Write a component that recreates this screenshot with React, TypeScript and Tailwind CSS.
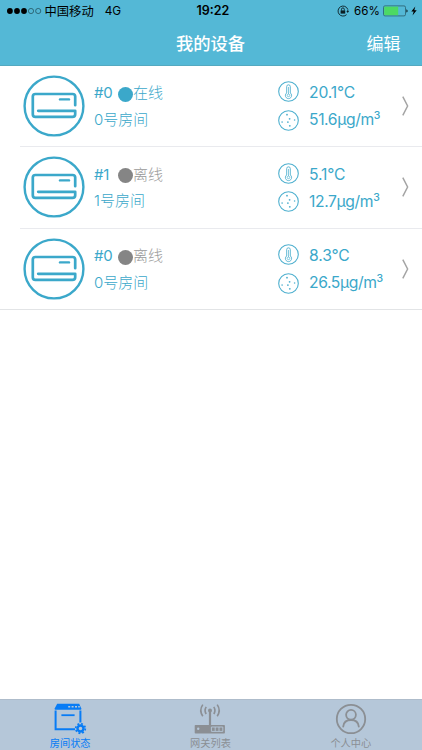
import React, { useState } from "react";

type Device = {
  id: string;
  code: string;
  name: string;
  online: boolean;
  temperature: string;
  dust: string;
};

const devices: Device[] = [
  { id: "a", code: "#0", name: "0号房间", online: true, temperature: "20.1", dust: "51.6" },
  { id: "b", code: "#1", name: "1号房间", online: false, temperature: "5.1", dust: "12.7" },
  { id: "c", code: "#0", name: "0号房间", online: false, temperature: "8.3", dust: "26.5" },
];

function StatusBar() {
  return (
    <div className="relative flex h-[22px] items-center text-[12px] leading-none text-black">
      <svg className="ml-[6px] h-[8px] w-[36px]" viewBox="0 0 36 8">
        <circle cx="3.9" cy="4" r="2.9" />
        <circle cx="11" cy="4" r="2.9" />
        <circle cx="18" cy="4" r="2.9" />
        <circle cx="25" cy="4" r="2.6" fill="none" stroke="#16353e" strokeWidth="0.6" />
        <circle cx="32.2" cy="4" r="2.6" fill="none" stroke="#16353e" strokeWidth="0.6" />
      </svg>
      <span className="ml-[2.5px] mt-[2px] text-[12.3px]">中国移动</span>
      <span className="ml-[11px] mt-[1px] text-[11.8px]">4G</span>
      <span className="absolute left-[196.5px] top-[5px] text-[12.5px] font-semibold">19:22</span>
      <svg className="ml-auto h-[12px] w-[12px]" viewBox="0 0 12 12" fill="none" stroke="#0b1d22" strokeWidth="0.9">
        <path d="M10.7 4.2A5 5 0 1 0 9.6 9.6M10.8 4.5v2" />
        <path d="M9.4 6.1h2.6L10.7 8z" fill="#0b1d22" stroke="none" />
        <path d="M4.5 5.5V4.3a1.4 1.4 0 0 1 2.8 0v1.2" />
        <rect x="3.6" y="5.4" width="4.6" height="3.2" fill="#0b1d22" stroke="none" />
      </svg>
      <span className="ml-[5.5px] mt-[1px] w-[26px] text-[11.6px]">66%</span>
      <svg className="ml-[3px] h-[12px] w-[25px]" viewBox="0 0 25 12">
        <rect x="0.5" y="0.9" width="22" height="10" rx="1.5" fill="none" stroke="#24505c" strokeWidth="0.7" />
        <path d="M1.2 1.6h14v8.6h-14z" fill="#4cd964" />
        <path d="M23.4 4.2c1.6.4 1.6 3 0 3.4z" fill="#0b1d22" />
      </svg>
      <svg className="ml-[3px] mr-[5px] h-[10px] w-[6px]" viewBox="0 0 6 10">
        <path d="M4.3 0.4 0.3 5.6h2.4L1.5 9.6 5.7 4.2H3.3z" />
      </svg>
    </div>
  );
}

function AirConditionerIcon() {
  return (
    <svg className="h-[62px] w-[62px] shrink-0" viewBox="0 0 62 62" fill="none" stroke="#3ba8ca">
      <circle cx="31" cy="31" r="29.4" strokeWidth="2.4" />
      <g strokeWidth="2.7" strokeLinecap="round" strokeLinejoin="round">
        <path d="M52.2 30.2V21.6q0-2.6-2.6-2.6H12.4q-2.6 0-2.6 2.6v17.6q0 2.6 2.6 2.6h37q2.8 0 2.8-2.6v-3.4H15.2" />
        <path d="M37 24.4h9" strokeWidth="2.4" />
      </g>
    </svg>
  );
}

function ThermometerIcon() {
  return (
    <svg className="h-[21px] w-[21px]" viewBox="0 0 21 21" fill="none" stroke="#4fb0cf">
      <circle cx="10.5" cy="10.5" r="9.8" strokeWidth="1.1" />
      <path d="M8.7 12V5.6a1.8 1.8 0 0 1 3.6 0V12a3.1 3.1 0 1 1-3.6 0z" strokeWidth="0.9" />
      <path d="M10.5 6v7" strokeWidth="0.7" />
      <circle cx="10.5" cy="14.4" r="1.3" strokeWidth="0.7" />
    </svg>
  );
}

function DustIcon() {
  return (
    <svg className="h-[21px] w-[21px]" viewBox="0 0 21 21" fill="#4fb0cf">
      <circle cx="10.5" cy="10.5" r="9.8" fill="none" stroke="#4fb0cf" strokeWidth="1.1" />
      <circle cx="9" cy="4.7" r="0.9" />
      <circle cx="11.6" cy="8.8" r="0.9" />
      <circle cx="16.6" cy="10" r="0.8" />
      <circle cx="4.1" cy="12.1" r="0.8" />
      <circle cx="9.9" cy="12.1" r="0.9" />
      <circle cx="11.8" cy="15.8" r="0.9" />
    </svg>
  );
}

function DeviceRow({ device, last }: { device: Device; last: boolean }) {
  return (
    <li className={last ? "border-b border-[#e2e4e6]" : ""}>
      <div
        className={
          last
            ? "ml-[20px] flex h-[80.5px] items-center pl-[2.5px]"
            : "ml-[20px] flex h-[81.5px] items-center border-b border-[#e9eaee] pl-[2.5px]"
        }
      >
        <AirConditionerIcon />
        <div className="ml-[9.5px] mt-[2.5px] w-[183.5px] text-[15px] font-light text-[#3ba8ca]">
          <div className="flex h-[26px] items-center whitespace-nowrap">
            <span className="w-[24px] font-normal tracking-[-0.3px]">{device.code}</span>
            <span
              className={
                device.online
                  ? "mt-[1px] h-[15px] w-[15px] rounded-full bg-[#3ba8ca]"
                  : "mt-[1px] h-[15px] w-[15px] rounded-full bg-[#858585]"
              }
            />
            <span className={device.online ? "" : "text-[#999999]"}>{device.online ? "在线" : "离线"}</span>
          </div>
          <div className="flex h-[27px] items-center">{device.name}</div>
        </div>
        <div className="flex w-[124px] flex-col gap-[7.5px] text-[15.7px] leading-none text-[#3ba8ca]">
          <div className="flex h-[21px] items-center">
            <ThermometerIcon />
            <span className="ml-[10.5px] mt-[3px] tracking-[-0.15px]">{device.temperature}°C</span>
          </div>
          <div className="flex h-[21px] items-center">
            <DustIcon />
            <span className="ml-[10.5px] whitespace-nowrap tracking-[-0.4px]">
              {device.dust}µg/m<span className="relative -top-[6px] text-[10.5px] font-medium">3</span>
            </span>
          </div>
        </div>
        <svg className="h-[20px] w-[7px]" viewBox="0 0 7 20" fill="none" stroke="#a5a5a5" strokeWidth="1.5">
          <path d="M0.8 0.7 5.6 10 0.8 19.3" />
        </svg>
      </div>
    </li>
  );
}

function RoomIcon() {
  return (
    <svg className="h-[32px] w-[34px]" viewBox="0 0 34 32" fill="none" stroke="currentColor">
      <path d="M4.2.8h22l2 4.4v1.6H1.8V5.2z" fill="currentColor" stroke="none" />
      <path d="M15.2 3.8h2M18.6 3.8h2M22 3.8h2M25.2 3.8h1.6" stroke="#b5c7d9" strokeWidth="1.5" />
      <path d="M2.6 7.4v18.9h19.5M27.4 7.4v12" strokeWidth="2" />
      <path d="M8.4 12.2h13.2" strokeWidth="1.8" />
      <circle cx="27.5" cy="25.5" r="3" strokeWidth="2.4" />
      <circle cx="27.5" cy="25.5" r="4.8" strokeWidth="1.7" strokeDasharray="1.88 1.89" />
    </svg>
  );
}

function GatewayIcon() {
  return (
    <svg className="h-[32px] w-[34px]" viewBox="0 0 34 32" fill="none" stroke="currentColor">
      <path d="M17 8v14" strokeWidth="2.2" strokeLinecap="round" />
      <circle cx="17" cy="7.4" r="2" fill="currentColor" stroke="none" />
      <path d="M13.2 3.8q-2.2 3.6 0 7.2M20.8 3.8q2.2 3.6 0 7.2M9.8 1.6q-4 5.8 0 11.6M24.2 1.6q4 5.8 0 11.6" strokeWidth="1.6" />
      <rect x="1.7" y="22" width="30.2" height="8.6" rx="0.8" fill="currentColor" stroke="none" />
      <path d="M18.4 24h11.4v4.4H18.4zM22.2 24v4.4M26 24v4.4" stroke="#b5c7d9" strokeWidth="0.9" />
      <circle cx="5.2" cy="25.8" r="1.2" fill="#b5c7d9" stroke="none" />
    </svg>
  );
}

function ProfileIcon() {
  return (
    <svg className="h-[32px] w-[34px]" viewBox="0 0 34 32" fill="none" stroke="currentColor" strokeWidth="1.8">
      <circle cx="17" cy="16" r="14.2" />
      <circle cx="17" cy="11.8" r="4.9" />
      <path d="M9.2 23.6c.4-4 3.3-6.6 7.8-6.6s7.4 2.6 7.8 6.6" strokeLinecap="round" />
    </svg>
  );
}

const tabs = [
  { key: "rooms", label: "房间状态", icon: <RoomIcon /> },
  { key: "gateways", label: "网关列表", icon: <GatewayIcon /> },
  { key: "profile", label: "个人中心", icon: <ProfileIcon /> },
];

export default function App() {
  const [active, setActive] = useState("rooms");

  return (
    <div className="flex h-[750px] w-[422px] flex-col overflow-hidden bg-white font-[Inter,'Noto_Sans_CJK_SC',sans-serif]">
      <header className="h-[65.5px] shrink-0 border-b border-[#54a9c0] bg-[#54b8d6]">
        <StatusBar />
        <div className="grid h-[43px] grid-cols-3 items-center text-[17.3px] text-white">
          <h1 className="col-start-2 -ml-[1px] text-center font-medium">我的设备</h1>
          <button className="mr-[21.5px] mt-[2px] justify-self-end text-[17px]">编辑</button>
        </div>
      </header>

      <ul className="flex-1">
        {devices.map((device, i) => (
          <DeviceRow key={device.id} device={device} last={i === devices.length - 1} />
        ))}
      </ul>

      {/* Tab bar */}
      <nav className="grid h-[51px] shrink-0 grid-cols-3 border-t border-[#aebccb] bg-[#b5c7d9] pr-[1px]">
        {tabs.map((tab) => (
          <button
            key={tab.key}
            onClick={() => setActive(tab.key)}
            className={
              active === tab.key
                ? "flex flex-col items-center pt-[3px] text-[#087cf5]"
                : "flex flex-col items-center pt-[3px] text-[#8b8f94]"
            }
          >
            {tab.icon}
            <span className="mt-[1px] text-[10.2px] leading-[14px]">{tab.label}</span>
          </button>
        ))}
      </nav>
    </div>
  );
}
